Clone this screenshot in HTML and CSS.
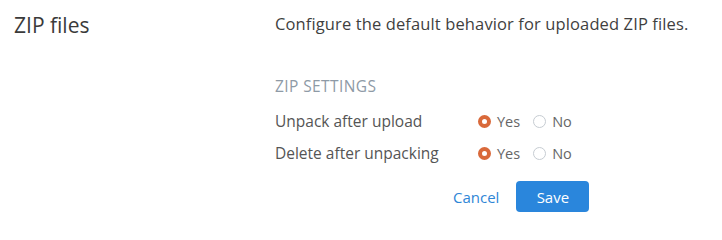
FILE: index.html
```html
<!DOCTYPE html>
<html>
<head>
<meta charset="utf-8">
<link rel="stylesheet" href="styles.css">
</head>
<body>
<div class="page">
  <div class="side">
    <h2 class="title">ZIP files</h2>
  </div>
  <div class="main">
    <p class="desc">Configure the default behavior for uploaded ZIP files.</p>
    <h3 class="section">ZIP SETTINGS</h3>
    <div class="rows">
      <div class="row">
        <span class="label">Unpack after upload</span>
        <div class="opts">
          <label class="opt"><span class="radio on"></span>Yes</label>
          <label class="opt"><span class="radio"></span>No</label>
        </div>
      </div>
      <div class="row">
        <span class="label">Delete after unpacking</span>
        <div class="opts">
          <label class="opt"><span class="radio on"></span>Yes</label>
          <label class="opt"><span class="radio"></span>No</label>
        </div>
      </div>
    </div>
    <div class="actions">
      <button class="cancel">Cancel</button>
      <button class="save">Save</button>
    </div>
  </div>
</div>
</body>
</html>
```
FILE: styles.css
```css
html, body {
  margin: 0;
  padding: 0;
  background: #fff;
}
body {
  font-family: "Open Sans", "Noto Sans", sans-serif;
  color: #444;
}
.page {
  display: flex;
  padding-top: 10px;
}
.side {
  width: 261px;
  padding-left: 14px;
}
.title {
  margin: 0;
  font-size: 21px;
  font-weight: 400;
  color: #3a3a3a;
  line-height: 30px;
}
.main {
  flex: 1;
}
.desc {
  margin: 2px 0 0;
  font-size: 16.5px;
  letter-spacing: 0.12px;
  line-height: 24px;
  color: #3f3f3f;
}
.section {
  margin: 39px 0 0;
  font-size: 15.5px;
  letter-spacing: 0.4px;
  font-weight: 400;
  color: #8e9aa6;
  line-height: 22px;
}
.rows {
  margin-top: 8px;
}
.row {
  display: flex;
  align-items: center;
  height: 32px;
}
.label {
  width: 203px;
  font-size: 15.5px;
  color: #555;
}
.opts {
  display: flex;
  gap: 13px;
}
.opt {
  display: flex;
  align-items: center;
  gap: 6px;
  font-size: 14.5px;
  color: #666;
}
.radio {
  box-sizing: border-box;
  width: 13px;
  height: 13px;
  border-radius: 50%;
  border: 1px solid #c6ccd2;
  background: #fff;
}
.radio.on {
  border: 4.5px solid #d9693a;
  background: #fff;
}
.actions {
  display: flex;
  align-items: center;
  gap: 17px;
  margin-top: 12px;
  padding-left: 178px;
}
.cancel {
  border: 0;
  background: none;
  padding: 0;
  font-family: inherit;
  font-size: 15px;
  color: #2f86d6;
}
.save {
  width: 73px;
  height: 31px;
  border: 0;
  border-radius: 4px;
  background: #2a86dc;
  color: #fff;
  font-family: inherit;
  font-size: 15px;
}
```
